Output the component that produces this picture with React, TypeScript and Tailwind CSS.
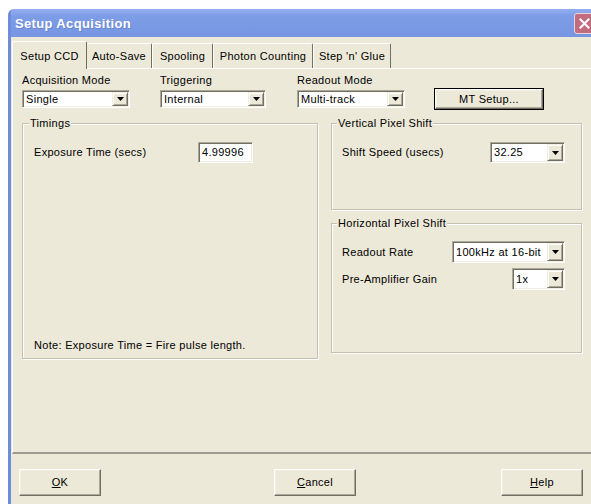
import React from "react";

type BoxProps = { value: string; className: string };

// Sunken combo box with a raised drop-down button
const Combo = ({ value, className }: BoxProps) => (
  <div
    className={`flex border border-t-[#aca899] border-l-[#aca899] border-b-white border-r-white bg-white ${className}`}
  >
    <div className="flex flex-1 p-[1px] shadow-[inset_1px_1px_0_#716f64,inset_-1px_-1px_0_#f1efe2]">
      <span className="flex flex-1 items-center pl-[2px] whitespace-nowrap overflow-hidden">{value}</span>
      <div className="flex w-[16px] items-center justify-center border border-t-[#f1efe2] border-l-[#f1efe2] border-b-[#716f64] border-r-[#716f64] bg-[#ece9d8] shadow-[inset_1px_1px_0_#fff,inset_-1px_-1px_0_#aca899]">
        <svg width="7" height="4" viewBox="0 0 7 4">
          <path d="M0 0h7L3.5 4z" fill="#000" />
        </svg>
      </div>
    </div>
  </div>
);

// Plain sunken edit field
const Field = ({ value, className }: BoxProps) => (
  <div
    className={`flex border border-t-[#aca899] border-l-[#aca899] border-b-white border-r-white bg-white ${className}`}
  >
    <div className="flex flex-1 items-center pl-[3px] shadow-[inset_1px_1px_0_#716f64,inset_-1px_-1px_0_#f1efe2]">
      {value}
    </div>
  </div>
);

// Raised push button
const PushButton = ({ children, className }: { children: React.ReactNode; className: string }) => (
  <div
    className={`flex items-center justify-center border border-t-white border-l-white border-b-[#716f64] border-r-[#716f64] bg-[#ece9d8] shadow-[inset_-1px_-1px_0_#aca899,inset_1px_1px_0_#f1efe2] ${className}`}
  >
    {children}
  </div>
);

export default function App() {
  return (
    <div className="w-[591px] h-[504px] overflow-hidden bg-white pl-[8px] pt-[9px] font-['Liberation_Sans',Arial,sans-serif] text-[11px] leading-[13px] tracking-[0.3px] text-black">
      <div className="flex w-[590px] h-[520px] flex-col overflow-hidden rounded-tl-[6px] rounded-tr-[6px] border-l-[3px] border-[#6f8cdc] bg-[#ece9d8]">
        {/* Title bar */}
        <div className="flex h-[28px] shrink-0 items-center justify-between bg-[linear-gradient(180deg,#93aef2_0%,#7e9de7_25%,#7796e2_100%)] pl-[4px] pr-[3px]">
          <span className="text-[13px] font-bold tracking-[0.35px] text-white [text-shadow:1px_1px_0_#6a84cc]">
            Setup Acquisition
          </span>
          <div className="flex h-[21px] w-[21px] items-center justify-center rounded-[3px] border border-[#e8d6dc] bg-[#c26c80]">
            <svg width="11" height="11" viewBox="0 0 11 11">
              <path d="M1.5 1.5l8 8M9.5 1.5l-8 8" stroke="#fff" strokeWidth="2" strokeLinecap="square" />
            </svg>
          </div>
        </div>

        <div className="flex flex-col pt-[4px]">
          {/* Tabs */}
          <div className="relative z-10 -mb-[1px] ml-[1px] flex h-[28px] items-end">
            <div className="flex h-[28px] w-[75px] justify-center rounded-t-[2px] border-l border-t border-r border-l-white border-t-white border-r-[#716f64] bg-[#ece9d8] pt-[8px]">
              Setup CCD
            </div>
            <div className="mb-[1px] flex h-[25px] w-[65px] justify-center rounded-t-[2px] border-t border-r border-t-white border-r-[#716f64] pt-[6px]">
              Auto-Save
            </div>
            <div className="mb-[1px] flex h-[25px] w-[61px] justify-center rounded-t-[2px] border-l border-t border-r border-l-white border-t-white border-r-[#716f64] pt-[6px]">
              Spooling
            </div>
            <div className="mb-[1px] flex h-[25px] w-[100px] justify-center rounded-t-[2px] border-l border-t border-r border-l-white border-t-white border-r-[#716f64] pt-[6px]">
              Photon Counting
            </div>
            <div className="mb-[1px] flex h-[25px] w-[78px] justify-center rounded-t-[2px] border-l border-t border-r border-l-white border-t-white border-r-[#716f64] pt-[6px]">
              Step 'n' Glue
            </div>
          </div>

          {/* Tab page */}
          <div className="ml-[1px] flex h-[386px] flex-col border-t border-l border-b-2 border-t-white border-l-white border-b-[#9d9b8f] pl-[9px] pt-[5px]">
            <div className="flex items-start">
              <div className="flex w-[138px] flex-col gap-[3px]">
                <span>Acquisition Mode</span>
                <Combo value="Single" className="h-[18px] w-[108px]" />
              </div>
              <div className="flex w-[137px] flex-col gap-[3px]">
                <span>Triggering</span>
                <Combo value="Internal" className="h-[18px] w-[106px]" />
              </div>
              <div className="flex w-[137px] flex-col gap-[3px]">
                <span>Readout Mode</span>
                <Combo value="Multi-track" className="h-[18px] w-[108px]" />
              </div>
              <div className="mt-[14px] flex h-[22px] w-[110px] border border-black">
                <PushButton className="h-full w-full">MT Setup...</PushButton>
              </div>
            </div>

            <div className="mt-[7px] flex items-start">
              <fieldset className="h-[242px] w-[296px] border border-[#c3c0ae] px-[11px] shadow-[inset_1px_1px_0_#fff,1px_1px_0_#fff]">
                <legend className="ml-[-5px] bg-[#ece9d8] px-[1px]">Timings</legend>
                <div className="mt-[12px] flex items-center">
                  <span className="w-[164px]">Exposure Time (secs)</span>
                  <Field value="4.99996" className="h-[21px] w-[55px]" />
                </div>
                <div className="mt-[176px]">Note: Exposure Time = Fire pulse length.</div>
              </fieldset>

              <div className="ml-[13px] flex w-[251px] flex-col">
                <fieldset className="h-[93px] border border-[#c3c0ae] pl-[10px] pr-[16px] shadow-[inset_1px_1px_0_#fff,1px_1px_0_#fff]">
                  <legend className="ml-[-5px] bg-[#ece9d8] px-[1px]">Vertical Pixel Shift</legend>
                  <div className="mt-[12px] flex items-center justify-between">
                    <span>Shift Speed (usecs)</span>
                    <Combo value="32.25" className="h-[21px] w-[75px]" />
                  </div>
                </fieldset>

                <fieldset className="mt-[7px] h-[136px] border border-[#c3c0ae] pl-[10px] pr-[16px] shadow-[inset_1px_1px_0_#fff,1px_1px_0_#fff]">
                  <legend className="ml-[-5px] bg-[#ece9d8] px-[1px]">Horizontal Pixel Shift</legend>
                  <div className="mt-[11px] flex items-center justify-between">
                    <span>Readout Rate</span>
                    <Combo value="100kHz at 16-bit" className="h-[22px] w-[113px]" />
                  </div>
                  <div className="mt-[5px] flex items-center justify-between">
                    <span>Pre-Amplifier Gain</span>
                    <Combo value="1x" className="h-[22px] w-[53px]" />
                  </div>
                </fieldset>
              </div>
            </div>
          </div>

          {/* Dialog buttons */}
          <div className="mt-[15px] flex">
            <PushButton className="ml-[8px] h-[27px] w-[82px]">
              <span>
                <span className="underline">O</span>K
              </span>
            </PushButton>
            <PushButton className="ml-[173px] h-[27px] w-[82px]">
              <span>
                <span className="underline">C</span>ancel
              </span>
            </PushButton>
            <PushButton className="ml-[145px] h-[27px] w-[82px]">
              <span>
                <span className="underline">H</span>elp
              </span>
            </PushButton>
          </div>
        </div>
      </div>
    </div>
  );
}
